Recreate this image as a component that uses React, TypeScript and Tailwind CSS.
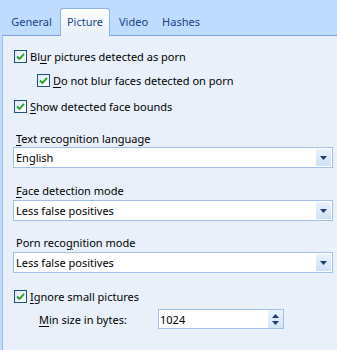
import type { ReactNode } from 'react'

const font = { fontFamily: '"Noto Sans", "Liberation Sans", sans-serif' }

function Check() {
  return (
    <div className="w-[13px] h-[13px] shrink-0 border border-[#1c5180] bg-gradient-to-br from-[#dfe8f3] to-white flex items-center justify-center">
      <svg width="9" height="9" viewBox="0 0 9 9">
        <path d="M1 4.5 L3.5 7 L8 1.8" fill="none" stroke="#21a121" strokeWidth="1.8" />
      </svg>
    </div>
  )
}

function CheckRow({ label, className }: { label: ReactNode; className?: string }) {
  return (
    <div className={`flex items-center h-[20px] gap-[3px] ${className ?? ''}`}>
      <Check />
      <span className="text-[11px] text-black leading-none whitespace-nowrap">{label}</span>
    </div>
  )
}

function U({ children }: { children: ReactNode }) {
  return <span className="underline underline-offset-2">{children}</span>
}

function Select({ value, className }: { value: string; className?: string }) {
  return (
    <div className={`h-[21px] mr-[4px] bg-white border border-[#a3c0e8] flex items-center ${className ?? ''}`}>
      <span className="flex-1 pl-[2px] text-[11px] text-black leading-none">{value}</span>
      <div className="w-[15px] h-[17px] mr-[1px] bg-gradient-to-b from-[#eaf2fd] to-[#cfe1f8] flex items-center justify-center">
        <svg width="7" height="4" viewBox="0 0 7 4">
          <path d="M0 0 H7 L3.5 4 Z" fill="#1e3b73" />
        </svg>
      </div>
    </div>
  )
}

function Label({ children, className }: { children: ReactNode; className?: string }) {
  return (
    <div className={`h-[16px] flex items-center pl-[2px] text-[11px] text-black leading-none ${className ?? ''}`}>
      <span>{children}</span>
    </div>
  )
}

export default function App() {
  return (
    <div className="w-[337px] h-[350px] bg-[#bfdbff] flex flex-col overflow-hidden" style={font}>
      <div className="h-[35px] flex items-end pl-[3px] text-[11px] text-[#15428b]">
        <div className="w-[57px] h-[25px] flex items-center justify-center">General</div>
        <div className="w-[50px] h-[28px] -mb-px z-10 flex items-center justify-center border border-b-0 border-[#8db2e3] rounded-t-[3px] bg-gradient-to-b from-white to-[#e9f0fa]">
          Picture
        </div>
        <div className="w-[47px] h-[25px] flex items-center justify-center">Video</div>
        <div className="w-[48px] h-[25px] flex items-center justify-center">Hashes</div>
      </div>
      <div className="flex-1 ml-[2px] bg-[#e9f0fa] border-t border-l border-t-[#7aa3dc] border-l-[#9bbde9] pl-[11px] pt-[10px] flex flex-col">
        <CheckRow label={<>Bl<U>u</U>r pictures detected as porn</>} />
        <CheckRow className="mt-[4px] ml-[23px]" label={<><U>D</U>o not blur faces detected on porn</>} />
        <CheckRow className="mt-[6px]" label={<><U>S</U>how detected face bounds</>} />

        <Label className="mt-[14px]"><U>T</U>ext recognition language</Label>
        <Select className="mt-[1px] -ml-[1px]" value="English" />

        <Label className="mt-[14px]"><U>F</U>ace detection mode</Label>
        <Select className="mt-[2px] -ml-[1px]" value="Less false positives" />

        <Label className="mt-[13px]">Porn reco<U>g</U>nition mode</Label>
        <Select className="mt-[2px] -ml-[1px]" value="Less false positives" />

        <CheckRow className="mt-[13px]" label={<><U>I</U>gnore small pictures</>} />

        <div className="mt-[3px] flex items-center h-[20px]">
          <span className="w-[144px] shrink-0 pl-[25px] text-[11px] text-black leading-none whitespace-nowrap"><U>M</U>in size in bytes:</span>
          <div className="w-[126px] h-[20px] bg-white border border-[#a3c0e8] flex items-center">
            <span className="flex-1 pl-[1px] text-[11px] text-black leading-none">1024</span>
            <div className="w-[15px] h-[18px] bg-gradient-to-b from-[#eaf2fd] to-[#d4e4f9] flex flex-col items-center justify-center gap-[3px]">
              <svg width="7" height="4" viewBox="0 0 7 4">
                <path d="M0 4 H7 L3.5 0 Z" fill="#1e3b73" />
              </svg>
              <svg width="7" height="4" viewBox="0 0 7 4">
                <path d="M0 0 H7 L3.5 4 Z" fill="#1e3b73" />
              </svg>
            </div>
          </div>
        </div>
      </div>
    </div>
  )
}
